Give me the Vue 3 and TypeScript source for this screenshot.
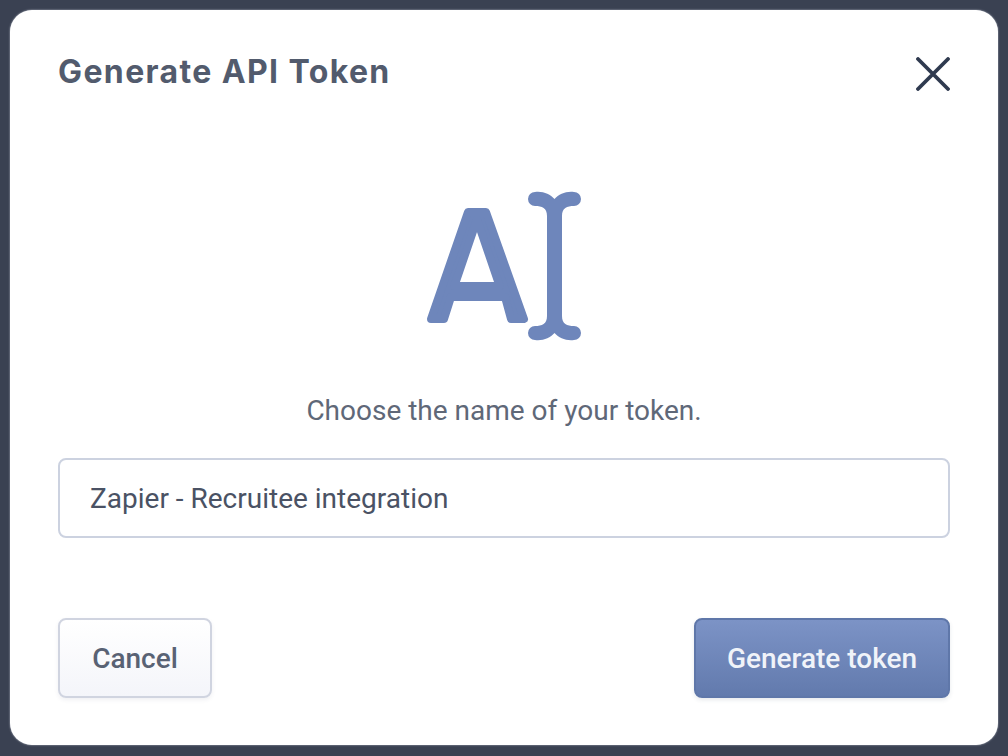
<template>
  <div class="backdrop">
    <div class="modal">
      <header class="modal-header">
        <h1 class="modal-title">Generate API Token</h1>
        <button class="close-btn" aria-label="Close">
          <svg width="34" height="34" viewBox="0 0 34 34">
            <path d="M2 2 L32 32 M32 2 L2 32" fill="none" stroke="#2f3a4f" stroke-width="3.8" stroke-linecap="round" />
          </svg>
        </button>
      </header>

      <div class="modal-icon">
        <svg width="210" height="190" viewBox="0 0 210 190">
          <path
            fill="#6e86bb"
            stroke="#6e86bb"
            stroke-width="8"
            stroke-linejoin="round"
            fill-rule="evenodd"
            d="M68 42 L86 42 L124 149 L111 149 L105 127 L51 127 L44 149 L31 149 Z M77 49.6 L54.4 116 L99.6 116 Z"
          />
          <path
            fill="#6e86bb"
            d="M135 22 C 143 21 150 24 154.5 29 C 159 24 166 21 174 22 A 7 7 0 0 1 174 36 C 167 36 162 38 162 46 V 146 C 162 154 167 156 174 156 A 7 7 0 0 1 174 170 C 166 171 159 168 154.5 163 C 150 168 143 171 135 170 A 7 7 0 0 1 135 156 C 142 156 147 154 147 146 V 46 C 147 38 142 36 135 36 A 7 7 0 0 1 135 22 Z"
          />
        </svg>
      </div>

      <p class="modal-text">Choose the name of your token.</p>

      <input v-model="tokenName" class="token-input" type="text" />

      <footer class="modal-actions">
        <button class="btn btn-ghost">Cancel</button>
        <button class="btn btn-primary">Generate token</button>
      </footer>
    </div>
  </div>
</template>

<script setup lang="ts">
import { ref } from 'vue'

const tokenName = ref('Zapier - Recruitee integration')
</script>

<style>
html, body { margin: 0; background: #3a4152; }
</style>

<style scoped>
.backdrop {
  box-sizing: border-box;
  height: 756px;
  padding: 10px 10px 11px;
  background: #3a4152;
  overflow: hidden;
}

.modal {
  box-sizing: border-box;
  height: 735px;
  padding: 40px 48px 47px;
  display: flex;
  flex-direction: column;
  background: #fff;
  border-radius: 22px;
  box-shadow: 0 0 2px rgba(200, 204, 215, 0.9);
}

.modal-header {
  display: flex;
  justify-content: space-between;
  align-items: flex-start;
  height: 120px;
}

.modal-title {
  margin: 1px 0 0;
  font-family: Inter, sans-serif;
  font-size: 32px;
  letter-spacing: 1.38px;
  line-height: 42px;
  font-weight: 700;
  color: #525b6d;
}

.close-btn {
  margin-top: 7px;
  padding: 0;
  border: none;
  background: none;
  line-height: 0;
}

.modal-icon {
  display: flex;
  justify-content: center;
  height: 190px;
  margin-left: 2px;
}
.modal-icon svg { display: block; }

.modal-text {
  margin: 33px 0 0;
  text-align: center;
  font-family: Roboto, sans-serif;
  font-size: 28px;
  line-height: 36px;
  color: #5f6878;
}

.token-input {
  box-sizing: border-box;
  width: 100%;
  height: 80px;
  margin-top: 29px;
  padding: 1px 30px 0;
  border: 2px solid #ccd2e0;
  border-radius: 8px;
  outline: none;
  background: #fff;
  font-family: Roboto, sans-serif;
  font-size: 28px;
  color: #4a5264;
}

.modal-actions {
  display: flex;
  justify-content: space-between;
  margin-top: auto;
}

.btn {
  box-sizing: border-box;
  height: 80px;
  padding: 0;
  border-radius: 8px;
  font-family: Roboto, sans-serif;
  font-size: 28px;
  font-weight: 500;
}

.btn-ghost {
  width: 154px;
  border: 2px solid #d0d4e0;
  background: linear-gradient(#ffffff, #f4f5fa);
  color: #596274;
  box-shadow: 0 2px 4px rgba(60, 70, 100, 0.08);
}

.btn-primary {
  width: 256px;
  border: 2px solid #5f77a9;
  background: linear-gradient(#7c93c6, #627aad);
  color: #f0f3f9;
  box-shadow: 0 2px 4px rgba(60, 70, 100, 0.12);
}
</style>
